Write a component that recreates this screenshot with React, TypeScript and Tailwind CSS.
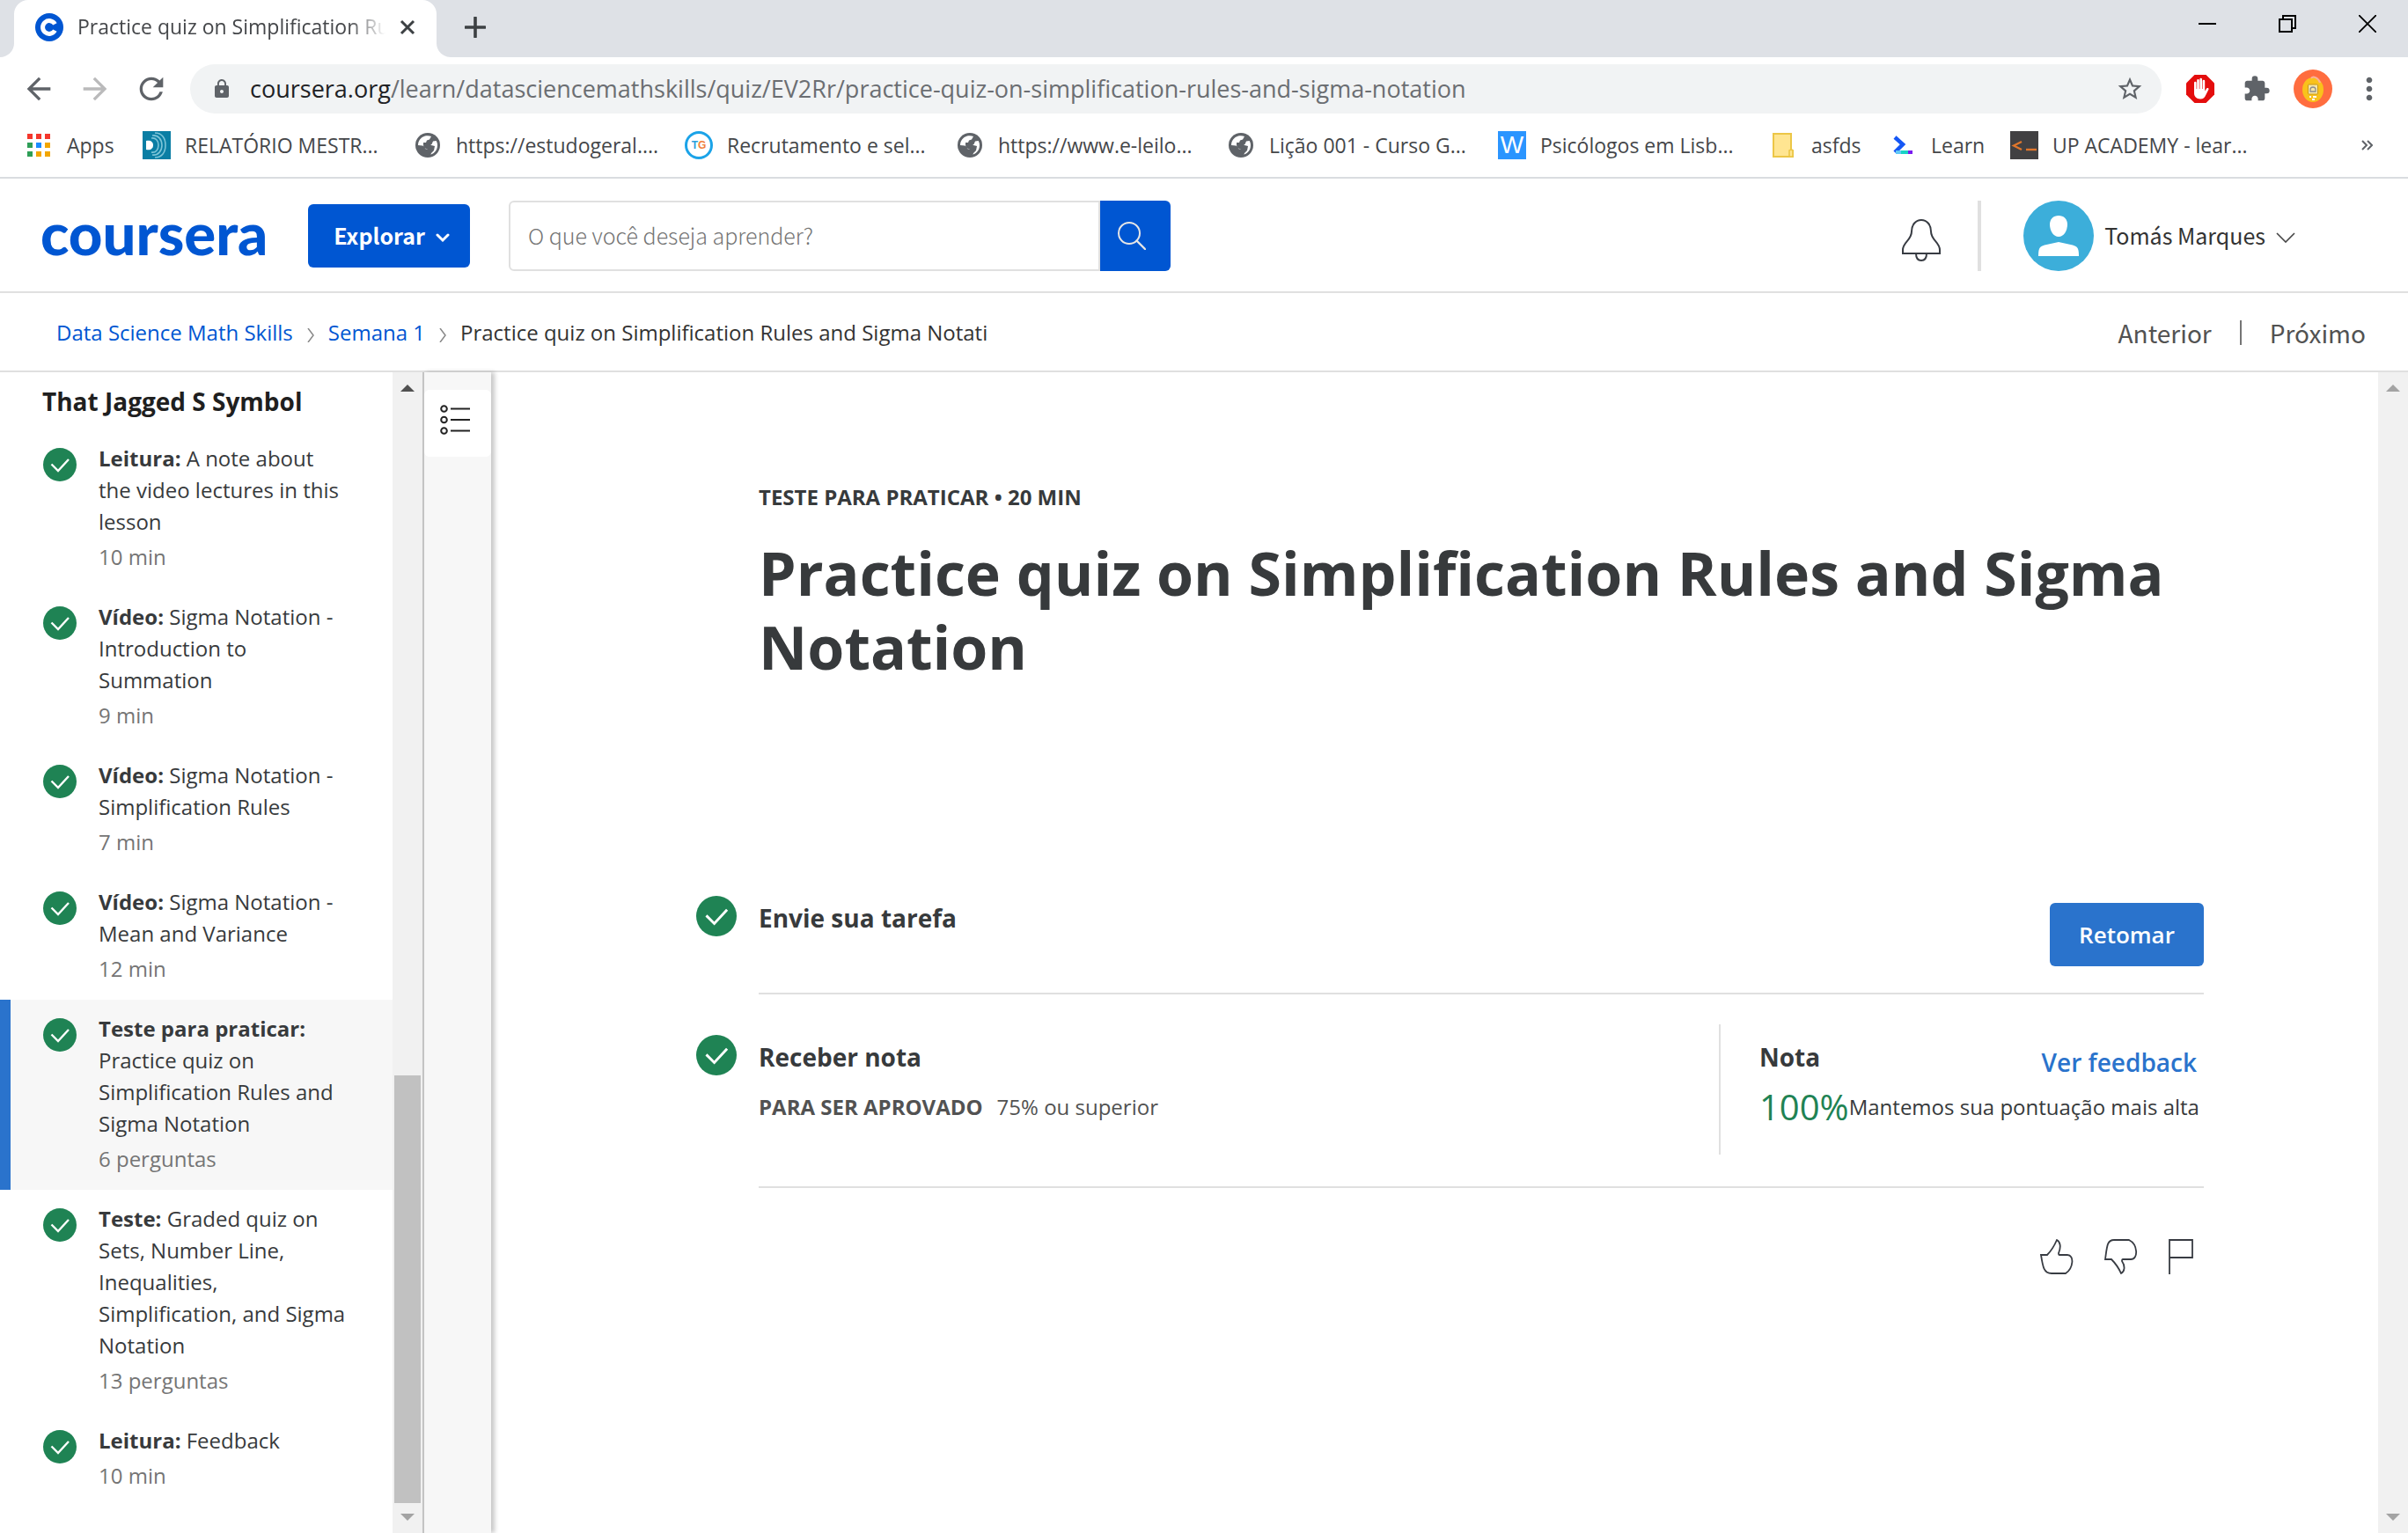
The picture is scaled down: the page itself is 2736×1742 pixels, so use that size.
import type { ReactNode } from "react";
import { FaGlobeAfrica } from "react-icons/fa";
import { MdArrowBack, MdArrowForward, MdExtension, MdLock, MdMoreVert, MdRefresh, MdStarBorder } from "react-icons/md";

/* ---------- shared drawings ---------- */

function CheckBadge({ className }: { className: string }) {
  return (
    <svg viewBox="0 0 38 38" className={className} aria-hidden="true">
      <circle cx="19" cy="19" r="19" fill="#1f8354" />
      <path d="M9.500 18.500 17 26 29 13" fill="none" stroke="#fff" strokeWidth="2.4" />
    </svg>
  );
}

function Arrow({ up, dark }: { up?: boolean; dark?: boolean }) {
  return (
    <svg viewBox="0 0 16 8" className={dark ? "h-2 w-4 text-[#505050]" : "h-2 w-4 text-[#a3a3a3]"} aria-hidden="true">
      <path d={up ? "M0 8 8 0l8 8z" : "M0 0 8 8l8-8z"} fill="currentColor" />
    </svg>
  );
}

/* ---------- browser chrome ---------- */

function CourseraFavicon() {
  return (
    <svg viewBox="0 0 32 32" className="size-8 shrink-0" aria-hidden="true">
      <circle cx="16" cy="16" r="16" fill="#0056d2" />
      <path d="M22.400 12.400A7.400 7.400 0 1 0 22.400 19.600" fill="none" stroke="#fff" strokeWidth="5" />
    </svg>
  );
}

function TabStrip() {
  return (
    <div className="flex h-[65px] shrink-0 items-stretch bg-[#dee1e6]">
      <div className="flex w-4 items-end bg-white">
        <div className="h-full w-full rounded-br-2xl bg-[#dee1e6]" />
      </div>
      <div className="bg-[#dee1e6]">
        <div className="flex h-full w-[480px] items-center rounded-t-2xl bg-white pl-6 pr-6 pb-1">
          <CourseraFavicon />
          <span className="ml-4 flex-1 overflow-hidden whitespace-nowrap text-[23px] text-[#45474a] [mask-image:linear-gradient(to_right,black_88%,transparent)]">
            Practice quiz on Simplification Rules
          </span>
          <button type="button" aria-label="Close tab" className="ml-4">
            <svg viewBox="0 0 18 18" className="size-[18px]" aria-hidden="true">
              <path d="M2 2l14 14M16 2 2 16" stroke="#3c4043" strokeWidth="3" />
            </svg>
          </button>
        </div>
      </div>
      <div className="w-4 bg-white">
        <div className="h-full w-full rounded-bl-2xl bg-[#dee1e6]" />
      </div>
      <button type="button" aria-label="New tab" className="ml-4 mb-1">
        <svg viewBox="0 0 24 24" className="size-6" aria-hidden="true">
          <path d="M12 1v22M1 12h22" stroke="#3c4043" strokeWidth="3.6" strokeLinecap="round" />
        </svg>
      </button>
      <div className="ml-auto mr-9 mb-3 flex items-center gap-[71px]">
        <button type="button" aria-label="Minimize">
          <svg viewBox="0 0 20 20" className="size-5" aria-hidden="true">
            <path d="M0 10h20" stroke="#000" strokeWidth="2" />
          </svg>
        </button>
        <button type="button" aria-label="Restore">
          <svg viewBox="0 0 20 20" className="size-5" aria-hidden="true">
            <path d="M1 5h14v14H1zM5 5V1h14v14h-4" fill="none" stroke="#000" strokeWidth="2" />
          </svg>
        </button>
        <button type="button" aria-label="Close">
          <svg viewBox="0 0 20 20" className="size-5" aria-hidden="true">
            <path d="M0 0l20 20M20 0 0 20" stroke="#000" strokeWidth="1.8" />
          </svg>
        </button>
      </div>
    </div>
  );
}

function Toolbar() {
  return (
    <div className="flex h-[72px] shrink-0 items-center pl-6 pr-6 text-[#5f6368]">
      <button type="button" aria-label="Back">
        <MdArrowBack className="size-10" />
      </button>
      <button type="button" aria-label="Forward" className="ml-6 text-[#bababb]">
        <MdArrowForward className="size-10" />
      </button>
      <button type="button" aria-label="Reload" className="ml-6">
        <MdRefresh className="size-10" />
      </button>
      <div className="ml-6 flex h-14 flex-1 items-center rounded-full bg-[#f1f3f4] pl-6 pr-5">
        <MdLock className="size-6" />
        <div className="ml-5 flex-1 truncate text-[27px] text-[#6b6e72]">
          <span className="text-[#202124]">coursera.org</span>
          /learn/datasciencemathskills/quiz/EV2Rr/practice-quiz-on-simplification-rules-and-sigma-notation
        </div>
        <button type="button" aria-label="Bookmark">
          <MdStarBorder className="size-8" />
        </button>
      </div>
      <button type="button" aria-label="Ad blocker" className="ml-7">
        <svg viewBox="0 0 32 32" className="size-8" aria-hidden="true">
          <path d="M9.500 0h13L32 9.500v13L22.500 32h-13L0 22.500v-13z" fill="#e40d0d" />
          <path
            d="M9 17V9a1.300 1.300 0 0 1 2.600 0V16h.6V6.300a1.300 1.300 0 0 1 2.600 0V16h.6V5a1.300 1.300 0 0 1 2.600 0V16h.6V7a1.300 1.300 0 0 1 2.600 0v11.500l2-3c1-1 2.800-.2 2.300 1L22.500 22.500C21.300 25.500 19.500 27.500 16 27.500 11.500 27.500 9 24.500 9 21z"
            fill="#fff"
          />
        </svg>
      </button>
      <button type="button" aria-label="Extensions" className="ml-8">
        <MdExtension className="size-8" />
      </button>
      <button type="button" aria-label="Profile" className="ml-[26px]">
        <svg viewBox="0 0 44 44" className="size-11" aria-hidden="true">
          <circle cx="22" cy="22" r="22" fill="#ff6d3f" />
          <ellipse cx="22" cy="23" rx="12" ry="14" fill="#f9c21b" />
          <path d="M20 10c2-3 8-1 10 5" fill="none" stroke="#fbb09a" strokeWidth="2" />
          <rect x="16.500" y="17" width="11" height="11" rx="1" fill="#f7e7a8" stroke="#c99718" />
          <path d="M19 25v-2a3 3 0 0 1 6 0v2z" fill="none" stroke="#8d8d8d" strokeWidth="1.300" />
          <path d="M18 31h2m2 0h4M21 34h3" stroke="#fff" strokeWidth="2" />
        </svg>
      </button>
      <button type="button" aria-label="Menu" className="ml-[22px]">
        <MdMoreVert className="size-10" />
      </button>
    </div>
  );
}

function AppsIcon() {
  const colors = ["#f4372c", "#f4372c", "#f4372c", "#2e9e57", "#1a8cff", "#f2a600", "#2e9e57", "#f2a600", "#f2a600"];
  return (
    <svg viewBox="0 0 32 32" className="size-8" aria-hidden="true">
      {colors.map((fill, i) => (
        <rect key={i} x={3 + (i % 3) * 10} y={3 + Math.floor(i / 3) * 10} width="6" height="6" fill={fill} />
      ))}
    </svg>
  );
}

function RippleIcon() {
  return (
    <svg viewBox="0 0 32 32" className="size-8" aria-hidden="true">
      <rect width="32" height="32" fill="#0a7ea4" />
      <path d="M4 11c5-1 8 1 8 5s-3 6-8 5z" fill="#fff" />
      <g fill="none" stroke="#7cc4d8" strokeWidth="1.600">
        <path d="M10 8c5-1 8 3 8 8s-3 9-8 8" />
        <path d="M11 5c7-1 11 5 11 11s-4 12-11 11" />
        <path d="M14 2c8 0 12 6 12 14s-4 14-12 14" />
      </g>
    </svg>
  );
}

function GlobeIcon() {
  return (
    <span className="flex size-8 items-center justify-center">
      <svg viewBox="0 0 28 28" className="size-7" aria-hidden="true">
        <circle cx="14" cy="14" r="14" fill="#5f6368" />
        <path
          d="M11 3.500C6 5 3 9 3 14l5 .5c2 .5 3 1.500 3 3.500l3 1 .5 6C21 24.500 25 20 25 14c0-2-.5-3.500-1.300-5L20 9.500l-1.500 3.500H14l-2-2 1-2.500 3-1 2-3.500c-2-1-5-1-7-.5zm3 13.500h4l-1 3-3-1z"
          fill="#fff"
        />
        <path d="M9 11h7l2 3 4 1-1 5-3 3-1 3-3-1v-6l-4-2-1-3z" fill="#5f6368" />
      </svg>
    </span>
  );
}

function TgIcon() {
  return (
    <span className="flex size-8 items-center justify-center rounded-full border-[3px] border-[#1ba3e8] font-['Liberation_Sans'] text-[12px] leading-none font-bold text-[#2aa0dc]">
      T<span className="text-[#f0803c]">G</span>
    </span>
  );
}

function WIcon() {
  return (
    <span className="flex size-8 items-center justify-center bg-[#2b95ff] font-['Liberation_Sans'] text-[28px] leading-none text-white">
      W
    </span>
  );
}

function FolderIcon() {
  return (
    <svg viewBox="0 0 32 32" className="size-8" aria-hidden="true">
      <path d="M5 3h20v18l2 1v7H5z" fill="#ffe591" stroke="#ecc646" strokeWidth="2" />
      <path d="M23 29v-7l2-1 2 1v7z" fill="#ffe591" stroke="#ecc646" strokeWidth="1.600" />
    </svg>
  );
}

function LearnIcon() {
  return (
    <svg viewBox="0 0 32 32" className="size-8" aria-hidden="true">
      <path d="M7 7l9 8-9 9" fill="none" stroke="#1557f5" strokeWidth="4.500" />
      <path d="M8 24h6" stroke="#62c8f5" strokeWidth="4" />
      <path d="M14 24h9" stroke="#19d3c5" strokeWidth="4" />
      <path d="M22 24h5" stroke="#7a1cf0" strokeWidth="4" />
    </svg>
  );
}

function TerminalIcon() {
  return (
    <svg viewBox="0 0 32 32" className="size-8" aria-hidden="true">
      <rect width="32" height="32" fill="#414042" />
      <path d="M13 12 4 16.500 13 21" fill="none" stroke="#e0762c" strokeWidth="2.400" />
      <path d="M18 21h12" stroke="#e0762c" strokeWidth="2.400" />
    </svg>
  );
}

function Bookmark({ icon, label, className }: { icon: ReactNode; label: string; className: string }) {
  return (
    <a href="#" className={`flex shrink-0 items-center gap-4 ${className}`}>
      {icon}
      <span className="whitespace-nowrap">{label}</span>
    </a>
  );
}

function BookmarksBar() {
  return (
    <nav aria-label="Bookmarks" className="flex h-[66px] shrink-0 items-center border-b-2 border-[#dadce0] pb-2 pl-7 pr-10 text-[23px] text-[#45474a]">
      <Bookmark icon={<AppsIcon />} label="Apps" className="w-[134px]" />
      <Bookmark icon={<RippleIcon />} label="RELATÓRIO MESTR..." className="w-[308px]" />
      <Bookmark icon={<GlobeIcon />} label="https://estudogeral...." className="w-[308px]" />
      <Bookmark icon={<TgIcon />} label="Recrutamento e sel..." className="w-[308px]" />
      <Bookmark icon={<GlobeIcon />} label="https://www.e-leilo..." className="w-[308px]" />
      <Bookmark icon={<GlobeIcon />} label="Lição 001 - Curso G..." className="w-[308px]" />
      <Bookmark icon={<WIcon />} label="Psicólogos em Lisb..." className="w-[308px]" />
      <Bookmark icon={<FolderIcon />} label="asfds" className="w-[136px]" />
      <Bookmark icon={<LearnIcon />} label="Learn" className="w-[138px]" />
      <Bookmark icon={<TerminalIcon />} label="UP ACADEMY - lear..." className="w-[308px]" />
      <button type="button" aria-label="More bookmarks" className="ml-auto">
        <svg viewBox="0 0 13 12" className="h-3 w-[13px]" aria-hidden="true">
          <path d="M1 1l5 5-5 5M7 1l5 5-5 5" fill="none" stroke="#5f6368" strokeWidth="2" />
        </svg>
      </button>
    </nav>
  );
}

/* ---------- site header ---------- */

function SiteHeader() {
  return (
    <header className="flex h-[130px] shrink-0 items-center border-b-2 border-[#e0e0e0] pt-0.5 pl-[46px] pr-[128px] font-['Noto_Sans_CJK_JP',sans-serif]">
      <a href="#" className="mb-2 w-[304px] font-['Lato',sans-serif] text-[67px] leading-[80px] font-black text-[#0056d2]">
        coursera
      </a>
      <button type="button" className="flex h-[72px] w-[184px] items-center justify-center gap-3 rounded-md bg-[#0056d2] pl-1.5 text-[25px] font-bold text-white">
        Explorar
        <svg viewBox="0 0 16 12" className="mt-1 h-3 w-4" aria-hidden="true">
          <path d="M2 3l6 6 6-6" fill="none" stroke="#fff" strokeWidth="3" strokeLinecap="round" />
        </svg>
      </button>
      <form role="search" className="ml-11 flex h-20 w-[752px]" onSubmit={(e) => e.preventDefault()}>
        <input
          type="text"
          aria-label="O que você deseja aprender?"
          placeholder="O que você deseja aprender?"
          className="min-w-0 flex-1 rounded-l-md border-2 border-[#e0e0e0] px-5 text-[25px] font-light outline-none placeholder:text-[#757575]"
        />
        <button type="submit" aria-label="Buscar" className="flex w-20 items-center justify-center rounded-r-md bg-[#0056d2]">
          <svg viewBox="0 0 32 32" className="mr-2 size-8" aria-hidden="true">
            <circle cx="13" cy="13" r="12" fill="none" stroke="#e6e6e6" strokeWidth="2" />
            <path d="M21.500 21.500 31 31" stroke="#e6e6e6" strokeWidth="2.400" strokeLinecap="round" />
          </svg>
        </button>
      </form>
      <button type="button" aria-label="Notificações" className="ml-auto">
        <svg viewBox="0 0 44 48" className="mt-2.5 h-12 w-11" fill="none" stroke="#383c43" strokeWidth="2" aria-hidden="true">
          <path d="M1 39v-4c0-9 10-11 10-21C11 6 16 1 22 1s11 5 11 13c0 10 10 12 10 21v4z" />
          <path d="M16 39c0 5 2 8 6 8s6-3 6-8" />
        </svg>
      </button>
      <span className="ml-[42px] h-20 w-1 bg-[#e0e0e0]" />
      <button type="button" className="ml-12 flex items-center text-[25px] text-[#333]">
        <svg viewBox="0 0 80 80" className="size-20" aria-hidden="true">
          <circle cx="40" cy="40" r="40" fill="#3caeda" />
          <path d="M40 17c6 0 10 4 10 10 0 7-4 14-10 14s-10-7-10-14c0-6 4-10 10-10z" fill="#fff" />
          <path d="M17 63c0-8 1-11 7-12.500L40 47l16 3.500C62 52 63 55 63 63z" fill="#fff" />
        </svg>
        <span className="ml-3">Tomás Marques</span>
        <svg viewBox="0 0 22 12" className="ml-3 mt-1 h-3 w-[22px]" aria-hidden="true">
          <path d="M1 1l10 10L21 1" fill="none" stroke="#444" strokeWidth="1.600" />
        </svg>
      </button>
    </header>
  );
}

function Crumb() {
  return (
    <svg viewBox="0 0 8 16" className="mt-1.5 h-4 w-2" aria-hidden="true">
      <path d="M1 0l6 8-6 8" fill="none" stroke="#888" strokeWidth="1.500" />
    </svg>
  );
}

function Breadcrumbs() {
  return (
    <div className="flex h-[90px] shrink-0 items-center justify-between border-b-2 border-[#e0e0e0] pt-0.5 pl-16 pr-12">
      <nav aria-label="Navegação" className="flex items-center gap-4 text-[24px] text-[#0056d2]">
        <a href="#">Data Science Math Skills</a>
        <Crumb />
        <a href="#">Semana 1</a>
        <Crumb />
        <span className="text-[#333]">Practice quiz on Simplification Rules and Sigma Notati</span>
      </nav>
      <div className="flex items-center font-['Noto_Sans_CJK_JP',sans-serif] text-[28px] text-[#525252]">
        <a href="#">Anterior</a>
        <span className="mx-8 h-7 w-0.5 bg-[#757575]" />
        <a href="#">Próximo</a>
      </div>
    </div>
  );
}

/* ---------- sidebar ---------- */

const lessons = [
  { kind: "Leitura:", title: "A note about the video lectures in this lesson", meta: "10 min" },
  { kind: "Vídeo:", title: "Sigma Notation - Introduction to Summation", meta: "9 min" },
  { kind: "Vídeo:", title: "Sigma Notation - Simplification Rules", meta: "7 min" },
  { kind: "Vídeo:", title: "Sigma Notation - Mean and Variance", meta: "12 min" },
  { kind: "Teste para praticar:", title: "Practice quiz on Simplification Rules and Sigma Notation", meta: "6 perguntas", active: true },
  { kind: "Teste:", title: "Graded quiz on Sets, Number Line, Inequalities, Simplification, and Sigma Notation", meta: "13 perguntas" },
  { kind: "Leitura:", title: "Feedback", meta: "10 min" },
];

function Sidebar() {
  return (
    <aside className="flex shrink-0">
      <div className="w-[446px]">
        <h2 className="pb-[13px] pl-12 pt-3.5 text-[28px] leading-[38px] font-bold text-[#1f1f1f]">That Jagged S Symbol</h2>
        <ul className="text-[24px] leading-9 text-[#373a3c]">
          {lessons.map((l, i) => (
            <li key={i}>
              <a
                href="#"
                className={
                  l.active
                    ? "flex border-l-[12px] border-[#2a73cc] bg-[#f7f7f7] pt-[15px] pb-[17px] pl-[37px] pr-12"
                    : "flex border-l-[12px] border-transparent pt-[15px] pb-[17px] pl-[37px] pr-12"
                }
              >
                <CheckBadge className="mt-1.5 size-[38px] shrink-0" />
                <span className="ml-[25px] flex-1">
                  <span className="block">
                    <strong className="font-bold">{l.kind}</strong> {l.title}
                  </span>
                  <span className="mt-1 block text-[#757575]">{l.meta}</span>
                </span>
              </a>
            </li>
          ))}
        </ul>
      </div>
      <div className="flex w-[34px] flex-col items-center bg-[#f1f1f1] py-3.5">
        <Arrow up dark />
        <div className="mb-3 w-[30px] flex-1 pt-[777px]">
          <div className="h-full bg-[#c1c1c1]" />
        </div>
        <Arrow />
      </div>
      <div className="relative w-[78px] border-l-2 border-[#c4c4c4] bg-[#f7f7f7] pt-5 shadow-[4px_0_5px_rgba(0,0,0,0.22)]">
        <button type="button" aria-label="Lista de itens" className="flex h-[76px] w-full items-center rounded-md bg-white pb-2 pl-[18px]">
          <svg viewBox="0 0 34 34" className="size-[34px]" fill="none" stroke="#222" strokeWidth="2" aria-hidden="true">
            <circle cx="4.500" cy="4.500" r="3.300" />
            <circle cx="4.500" cy="17" r="3.300" />
            <circle cx="4.500" cy="29.500" r="3.300" />
            <path d="M12 4.500h22M12 17h22M12 29.500h22" />
          </svg>
        </button>
      </div>
    </aside>
  );
}

/* ---------- quiz content ---------- */

function QuizContent() {
  return (
    <main className="flex-1 pl-[233px] pr-[198px] pt-32 text-[#373a3c]">
      <div className="pl-[71px]">
        <p className="text-[24px] leading-7 font-bold">TESTE PARA PRATICAR • 20 MIN</p>
        <h1 className="mt-[30px] text-[68px] leading-[84px] font-bold">Practice quiz on Simplification Rules and Sigma Notation</h1>
      </div>

      <section className="mt-[241px] flex">
        <CheckBadge className="size-[46px] shrink-0" />
        <div className="ml-[25px] flex flex-1 justify-between border-b-2 border-[#e0e0e0] pb-[30px]">
          <h3 className="mt-1.5 text-[28px] leading-[38px] font-bold">Envie sua tarefa</h3>
          <button type="button" className="mt-2 h-[72px] w-[175px] rounded-md bg-[#2a73cc] text-[26px] font-semibold text-white">
            Retomar
          </button>
        </div>
      </section>

      <section className="flex">
        <CheckBadge className="mt-[46px] size-[46px] shrink-0" />
        <div className="ml-[25px] flex flex-1 justify-between border-b-2 border-[#e0e0e0] pb-9 pt-[34px]">
          <div className="pt-[18px]">
            <h3 className="text-[28px] leading-[38px] font-bold">Receber nota</h3>
            <p className="mt-5 text-[24px] leading-9 text-[#525252]">
              <strong className="mr-4 font-bold">PARA SER APROVADO</strong>
              75% ou superior
            </p>
          </div>
          <div className="h-[148px] w-[551px] border-l-2 border-[#e0e0e0] pl-11 pt-[18px]">
            <div className="flex justify-between pr-2">
              <h3 className="text-[28px] leading-[38px] font-bold">Nota</h3>
              <a href="#" className="mt-1.5 text-[28px] leading-[38px] font-semibold text-[#2a73cc]">
                Ver feedback
              </a>
            </div>
            <p className="mt-3 flex items-center whitespace-nowrap text-[24px] leading-10">
              <span className="text-[40px]  text-[#1f8354]">100%</span>
              Mantemos sua pontuação mais alta
            </p>
          </div>
        </div>
      </section>

      <div className="mt-[58px] flex justify-end gap-[35px] pr-3">
        <button type="button" aria-label="Gostei">
          <svg viewBox="0 0 38 40" className="h-10 w-[38px]" fill="none" stroke="#383c43" strokeWidth="1.800" aria-hidden="true">
            <path d="M1 18h7c5-5 8-10 11-17 4 2 5 8 2 15 0 1 0 2 1 2h9c8 0 7 15-2 21H13c-9 0-10-8-12-21z" />
          </svg>
        </button>
        <button type="button" aria-label="Não gostei">
          <svg viewBox="0 0 38 40" className="h-10 w-[38px]" fill="none" stroke="#383c43" strokeWidth="1.800" aria-hidden="true">
            <path d="M1 23h7c5 5 8 9 11 16 4-2 5-8 1-14 0-1 0-2 1-2h9c9 0 8-17-2-22H11C3 1 3 8 1 23z" />
          </svg>
        </button>
        <button type="button" aria-label="Denunciar">
          <svg viewBox="0 0 28 40" className="h-10 w-7" fill="none" stroke="#383c43" strokeWidth="1.800" aria-hidden="true">
            <path d="M1 40V1h26v20H1" />
          </svg>
        </button>
      </div>
    </main>
  );
}

export default function App() {
  return (
    <div className="flex h-screen flex-col overflow-hidden bg-white font-['Open_Sans',sans-serif]">
      <TabStrip />
      <Toolbar />
      <BookmarksBar />
      <SiteHeader />
      <Breadcrumbs />
      <div className="flex min-h-0 flex-1">
        <Sidebar />
        <QuizContent />
        <div className="flex w-[34px] shrink-0 flex-col items-center justify-between bg-[#f1f1f1] py-3.5">
          <Arrow up />
          <Arrow />
        </div>
      </div>
    </div>
  );
}
